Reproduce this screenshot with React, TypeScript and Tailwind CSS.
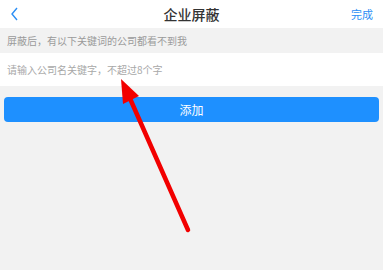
const font = { fontFamily: '"Noto Sans CJK SC", "Liberation Sans", sans-serif' };

export default function App() {
  return (
    <div className="relative w-[383px] h-[270px] bg-[#f2f2f2] overflow-hidden" style={font}>
      {/* header */}
      <div className="h-[28px] bg-white grid grid-cols-[1fr_auto_1fr] items-center px-[10px]">
        <svg width="10" height="14" viewBox="0 0 10 14">
          <polyline points="7,1 2,7 7,13" fill="none" stroke="#2a8ef5" strokeWidth="1.4" />
        </svg>
        <div className="text-[14px] font-medium text-[#333] leading-none">企业屏蔽</div>
        <div className="text-[11px] text-[#2a8ef5] leading-none justify-self-end">完成</div>
      </div>
      <div className="h-[25px] flex items-center px-[7px] text-[10px] text-[#9a9a9a]">
        屏蔽后，有以下关键词的公司都看不到我
      </div>
      <div className="h-[33px] bg-white flex items-center px-[7px] text-[10px] text-[#a8a8a8]">
        请输入公司名关键字，不超过8个字
      </div>
      <div className="px-[4px] pt-[11px]">
        <div className="h-[25px] rounded-[4px] bg-[#1e90ff] flex items-center justify-center text-white text-[12px]">
          添加
        </div>
      </div>
      {/* red annotation arrow */}
      <svg className="absolute left-0 top-0" width="383" height="270" viewBox="0 0 383 270">
        <line x1="188" y1="230" x2="128" y2="94" stroke="#f20000" strokeWidth="4.5" strokeLinecap="round" />
        <polygon points="121,79 123,104 139,96" fill="#f20000" />
      </svg>
    </div>
  );
}
